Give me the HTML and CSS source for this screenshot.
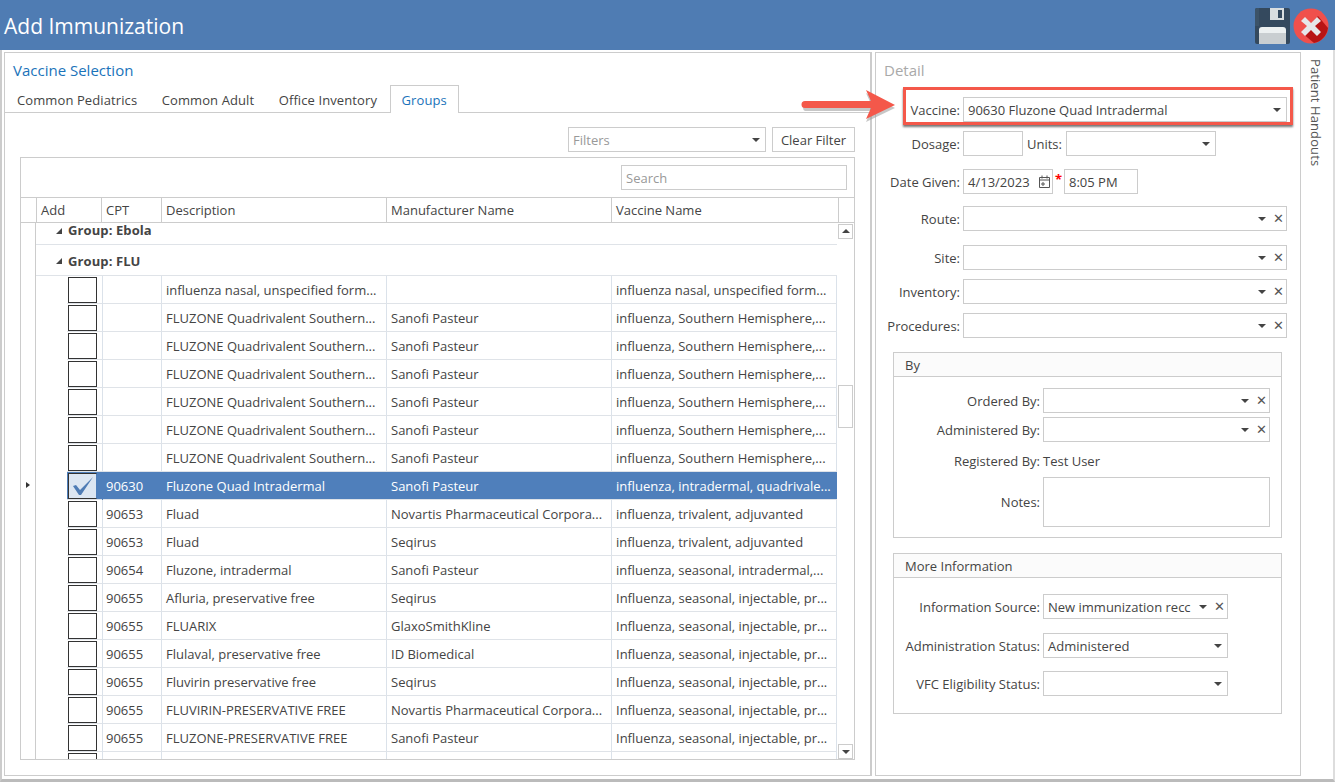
FILE: index.html
```html
<!DOCTYPE html>
<html lang="en">
<head>
<meta charset="utf-8">
<title>Add Immunization</title>
<link rel="stylesheet" href="styles.css">
</head>
<body>
<div class="window">
  <header class="titlebar">
    <h1 class="title">Add Immunization</h1>
    <div class="title-actions">
      <svg class="icon-save" width="35" height="36" viewBox="0 0 35 36" aria-label="Save"><rect width="35" height="36" rx="2" fill="#34495e"/><path d="M0 2a2 2 0 0 1 2-2h2v18H0z" fill="#3c5368"/><rect x="15" y="0" width="14" height="12" fill="#d9dee0"/><rect x="23" y="2" width="4" height="8" fill="#34495e"/><path d="M4 26v-4a3 3 0 0 1 3-3h21a3 3 0 0 1 3 3v4z" fill="#ecf0f1"/><rect x="4" y="25" width="27" height="11" fill="#c9ced1"/></svg>
      <svg class="icon-close" width="36" height="36" viewBox="0 0 36 36" aria-label="Close"><circle cx="18" cy="18" r="17.5" fill="#f0504c"/><path d="M25 8l10 12a17.5 17.5 0 0 1-14 15L9 25z" fill="#b81414"/><path d="M12 9l6 6 6-6 4 4-6 5 6 6-4 4-6-6-6 6-4-4 6-6-6-5z" fill="#e6e7e9"/></svg>
    </div>
  </header>
  <div class="body">
    <section class="selection">
      <h2 class="panel-title blue">Vaccine Selection</h2>
      <nav class="tabs">
        <span class="tab">Common Pediatrics</span>
        <span class="tab">Common Adult</span>
        <span class="tab">Office Inventory</span>
        <span class="tab active">Groups</span>
      </nav>
      <div class="tab-body">
        <div class="filters">
          <div class="box filter-select"><span class="muted">Filters</span><i class="caret"></i></div>
          <button class="btn" type="button">Clear Filter</button>
        </div>
        <div class="grid">
          <div class="grid-search"><div class="box search muted">Search</div></div>
          <div class="grid-head">
            <span></span><span>Add</span><span>CPT</span><span>Description</span><span>Manufacturer Name</span><span>Vaccine Name</span><span></span>
          </div>
          <div class="grid-body">
            <div class="indicator"><i class="row-mark"></i></div>
            <div class="rows">
              <div class="group clipped"><i class="tri"></i>Group: Ebola</div>
              <div class="group"><i class="tri"></i>Group: FLU</div>
              <div class="row"><span class="check"></span><span></span><span>influenza nasal, unspecified form...</span><span></span><span>influenza nasal, unspecified form...</span></div>
              <div class="row"><span class="check"></span><span></span><span>FLUZONE Quadrivalent Southern...</span><span>Sanofi Pasteur</span><span>influenza, Southern Hemisphere,...</span></div>
              <div class="row"><span class="check"></span><span></span><span>FLUZONE Quadrivalent Southern...</span><span>Sanofi Pasteur</span><span>influenza, Southern Hemisphere,...</span></div>
              <div class="row"><span class="check"></span><span></span><span>FLUZONE Quadrivalent Southern...</span><span>Sanofi Pasteur</span><span>influenza, Southern Hemisphere,...</span></div>
              <div class="row"><span class="check"></span><span></span><span>FLUZONE Quadrivalent Southern...</span><span>Sanofi Pasteur</span><span>influenza, Southern Hemisphere,...</span></div>
              <div class="row"><span class="check"></span><span></span><span>FLUZONE Quadrivalent Southern...</span><span>Sanofi Pasteur</span><span>influenza, Southern Hemisphere,...</span></div>
              <div class="row"><span class="check"></span><span></span><span>FLUZONE Quadrivalent Southern...</span><span>Sanofi Pasteur</span><span>influenza, Southern Hemisphere,...</span></div>
              <div class="row selected"><span class="check checked"><svg width="24" height="22" viewBox="0 0 24 22"><path d="M2 11l3-1 4 5L22 2 10 20H8z" fill="#4f7cb5"/></svg></span><span>90630</span><span>Fluzone Quad Intradermal</span><span>Sanofi Pasteur</span><span>influenza, intradermal, quadrivale...</span></div>
              <div class="row"><span class="check"></span><span>90653</span><span>Fluad</span><span>Novartis Pharmaceutical Corpora...</span><span>influenza, trivalent, adjuvanted</span></div>
              <div class="row"><span class="check"></span><span>90653</span><span>Fluad</span><span>Seqirus</span><span>influenza, trivalent, adjuvanted</span></div>
              <div class="row"><span class="check"></span><span>90654</span><span>Fluzone, intradermal</span><span>Sanofi Pasteur</span><span>influenza, seasonal, intradermal,...</span></div>
              <div class="row"><span class="check"></span><span>90655</span><span>Afluria, preservative free</span><span>Seqirus</span><span>Influenza, seasonal, injectable, pr...</span></div>
              <div class="row"><span class="check"></span><span>90655</span><span>FLUARIX</span><span>GlaxoSmithKline</span><span>Influenza, seasonal, injectable, pr...</span></div>
              <div class="row"><span class="check"></span><span>90655</span><span>Flulaval, preservative free</span><span>ID Biomedical</span><span>Influenza, seasonal, injectable, pr...</span></div>
              <div class="row"><span class="check"></span><span>90655</span><span>Fluvirin preservative free</span><span>Seqirus</span><span>Influenza, seasonal, injectable, pr...</span></div>
              <div class="row"><span class="check"></span><span>90655</span><span>FLUVIRIN-PRESERVATIVE FREE</span><span>Novartis Pharmaceutical Corpora...</span><span>Influenza, seasonal, injectable, pr...</span></div>
              <div class="row"><span class="check"></span><span>90655</span><span>FLUZONE-PRESERVATIVE FREE</span><span>Sanofi Pasteur</span><span>Influenza, seasonal, injectable, pr...</span></div>
              <div class="row partial"><span class="check"></span><span></span><span></span><span></span><span></span></div>
            </div>
            <div class="scrollbar">
              <span class="sb-btn"><i class="up"></i></span>
              <span class="sb-thumb"></span>
              <span class="sb-btn"><i class="caret"></i></span>
            </div>
          </div>
        </div>
      </div>
    </section>
    <section class="detail">
      <h2 class="panel-title grey">Detail</h2>
      <div class="field first">
        <label class="lbl">Vaccine:</label>
        <div class="box wide"><span>90630 Fluzone Quad Intradermal</span><i class="caret"></i></div>
        <div class="callout"></div>
        <svg class="arrow" width="100" height="34" viewBox="0 0 100 34"><path d="M5 12h66l-5-11 29 15-29 14 5-11H5a4 4 0 0 1 0-7z" fill="#999" opacity=".55" transform="translate(0 2)"/><path d="M5 11h66L66 0l29 15-29 14 5-11H5a3.500 3.500 0 0 1 0-7z" fill="#f4584a"/></svg>
      </div>
      <div class="field m9">
        <label class="lbl">Dosage:</label>
        <div class="box dose"></div>
        <label class="units">Units:</label>
        <div class="box unit-select"><i class="caret"></i></div>
      </div>
      <div class="field m13">
        <label class="lbl">Date Given:</label>
        <div class="box date"><span>4/13/2023</span><svg width="13" height="13" viewBox="0 0 13 13" fill="none" stroke="#555"><path d="M1.500 2.500h10v10h-10zM1.500 5h10M4 .5v3M9 .5v3M4 8h2v2H4z"/></svg></div>
        <span class="req">*</span>
        <div class="box time">8:05 PM</div>
      </div>
      <div class="field m12"><label class="lbl">Route:</label><div class="box wide"><i class="caret"></i><i class="clear">✕</i></div></div>
      <div class="field m14"><label class="lbl">Site:</label><div class="box wide"><i class="caret"></i><i class="clear">✕</i></div></div>
      <div class="field m9"><label class="lbl">Inventory:</label><div class="box wide"><i class="caret"></i><i class="clear">✕</i></div></div>
      <div class="field m9"><label class="lbl">Procedures:</label><div class="box wide"><i class="caret"></i><i class="clear">✕</i></div></div>

      <fieldset class="group-box by">
        <div class="group-head">By</div>
        <div class="sub first-sub"><label class="lbl2">Ordered By:</label><div class="box mid"><i class="caret"></i><i class="clear">✕</i></div></div>
        <div class="sub m4"><label class="lbl2">Administered By:</label><div class="box mid"><i class="caret"></i><i class="clear">✕</i></div></div>
        <div class="sub m6"><label class="lbl2">Registered By:</label><span>Test User</span></div>
        <div class="sub m4 tall"><label class="lbl2">Notes:</label><div class="box mid notes"></div></div>
      </fieldset>

      <fieldset class="group-box info">
        <div class="group-head">More Information</div>
        <div class="sub info-first"><label class="lbl2">Information Source:</label><div class="box short"><span class="clip">New immunization recc</span><i class="caret"></i><i class="clear">✕</i></div></div>
        <div class="sub m14"><label class="lbl2">Administration Status:</label><div class="box short"><span>Administered</span><i class="caret"></i></div></div>
        <div class="sub m13"><label class="lbl2">VFC Eligibility Status:</label><div class="box short"><i class="caret"></i></div></div>
      </fieldset>
    </section>
    <aside class="handouts">Patient Handouts</aside>
  </div>
</div>
</body>
</html>
```
FILE: styles.css
```css
* { box-sizing: border-box; }
html, body { margin: 0; padding: 0; }
body {
  width: 1335px;
  height: 782px;
  overflow: hidden;
  background: #fff;
  font-family: "Open Sans", "Noto Sans", "Liberation Sans", sans-serif;
  font-size: 13px;
  color: #444;
}
.window {
  width: 1335px;
  height: 782px;
  display: flex;
  flex-direction: column;
  border-left: 2px solid #ccc;
  border-right: 2px solid #ddd;
  border-bottom: 3px solid #bbb;
}
.titlebar {
  flex: 0 0 50px;
  margin: 0 -2px;
  background: #4f7cb3;
  display: flex;
  align-items: center;
  justify-content: space-between;
  padding: 2px 6px 0 4px;
}
.title {
  margin: 0;
  font-size: 21px;
  font-weight: 400;
  color: #fff;
}
.title-actions { display: flex; align-items: center; gap: 3px; }
.body { flex: 1; display: flex; min-height: 0; padding-top: 2px; }
.selection {
  width: 868px;
  margin: 0 0 3px 2px;
  border: 1px solid #ccc;
  border-right-width: 2px;
  border-left-width: 1px;
  display: flex;
  flex-direction: column;
}
.panel-title {
  margin: 0;
  font-size: 15px;
  font-weight: 400;
  line-height: 20px;
  padding: 7px 0 0 8px;
}
.blue { color: #1a73ba; }
.grey { color: #a9a9a9; }
.tabs {
  display: flex;
  gap: .5px;
  height: 33px;
  padding-top: 5px;
  letter-spacing: .1px;
}
.tab { padding: 0 12px; line-height: 31px; height: 28px; color: #444; }
.tab.active {
  color: #1a73ba;
  border: 1px solid #ccc;
  border-bottom: 0;
  background: #fff;
  padding: 0 11px;
  line-height: 29px;
  position: relative;
  z-index: 1;
}
.tab-body {
  flex: 1;
  margin-top: -1px;
  border-top: 1px solid #ccc;
  padding: 14px 15px 15px 15px;
  display: flex;
  flex-direction: column;
  min-height: 0;
}
.box {
  border: 1px solid #ccc;
  background: #fff;
  height: 25px;
  display: flex;
  align-items: center;
  padding-left: 4px;
  position: relative;
  color: #444;
  white-space: nowrap;
}
.muted { color: #999; }
.caret {
  display: inline-block;
  width: 0;
  height: 0;
  border-left: 4px solid transparent;
  border-right: 4px solid transparent;
  border-top: 4px solid #444;
}
.box > .caret { margin-left: auto; margin-right: 5px; }
.clear {
  font-style: normal;
  font-family: "DejaVu Sans", sans-serif;
  font-size: 13px;
  line-height: 16px;
  padding-top: 1px;
  color: #555;
  width: 13px;
  margin-right: 1px;
  text-align: center;
}
.box > .caret:has(+ .clear) { margin-right: 6px; }
.filters { display: flex; justify-content: flex-end; gap: 6px; margin-bottom: 5px; }
.filter-select { width: 198px; }
.btn {
  width: 83px;
  height: 25px;
  border: 1px solid #ccc;
  background: #fff;
  font: inherit;
  color: #444;
  padding: 0;
}
.grid {
  flex: 1;
  min-height: 0;
  border: 1px solid #ccc;
  display: flex;
  flex-direction: column;
}
.grid-search {
  flex: 0 0 39px;
  display: flex;
  justify-content: flex-end;
  align-items: flex-start;
  padding: 7px 7px 0 0;
}
.search { width: 226px; }
.grid-head {
  flex: 0 0 26px;
  display: grid;
  grid-template-columns: 15px 65px 60px 225px 225px 227px 17px;
  border-top: 1px solid #ccc;
  border-bottom: 1px solid #ccc;
  background: #fff;
  position: relative;
  z-index: 1;
}
.grid-head span {
  border-left: 1px solid #ccc;
  padding-left: 4px;
  line-height: 24px;
}
.grid-head span:first-child { border-left: 0; }
.grid-body { flex: 1; display: flex; min-height: 0; }
.indicator {
  width: 15px;
  flex: none;
  border-right: 1px solid #ccc;
  padding: 259px 0 0 5px;
}
.row-mark {
  display: block;
  width: 0;
  height: 0;
  border-top: 3.500px solid transparent;
  border-bottom: 3.500px solid transparent;
  border-left: 4px solid #333;
}
.rows { width: 801px; flex: none; }
.group {
  height: 31px;
  border-bottom: 1px solid #dfe3e8;
  padding: 2px 0 0 20px;
  font-weight: 700;
  font-size: 13px;
  line-height: 15px;
  letter-spacing: .1px;
  display: flex;
  align-items: center;
  gap: 3px;
  color: #444;
}
.group.clipped { height: 22px; padding: 0 0 6px 20px; }
.tri {
  width: 0;
  height: 0;
  border-left: 6px solid transparent;
  border-bottom: 6px solid #444;
  margin-right: 3px;
}
.row {
  height: 28px;
  margin-left: 31px;
  display: grid;
  grid-template-columns: 35px 60px 225px 225px 225px;
  border-bottom: 1px solid #dfe3e8;
  align-items: stretch;
}
.row.partial { height: 7px; border-bottom: 0; overflow: hidden; }
.row > span {
  border-right: 1px solid #dbe2ea;
  padding-left: 4px;
  line-height: 28px;
  white-space: nowrap;
  overflow: hidden;
}
.row > .check {
  width: 29px;
  height: 26px;
  margin: 1px 5px 0 1px;
  padding: 0;
  border: 1px solid #333;
  background: #fff;
  overflow: visible;
  position: relative;
}
.row .check::after {
  content: "";
  position: absolute;
  top: -2px;
  bottom: -2px;
  right: -7px;
  width: 1px;
  background: #dbe2ea;
}
.row.selected { background: #4f7fbb; }
.row.selected > span { color: #fff; border-right-color: #4f7fbb; }
.row.selected .check::after { background: #4f7fbb; }
.checked {
  background: #dce6f2 !important;
  display: flex;
  align-items: center;
  justify-content: center;
}
.scrollbar {
  flex: 1;
  position: relative;
  display: flex;
  flex-direction: column;
  padding: 1px 1px 0 0;
  align-items: flex-end;
}
.sb-btn {
  width: 15px;
  height: 15px;
  border: 1px solid #ccc;
  display: flex;
  align-items: center;
  justify-content: center;
  background: #fff;
}
.sb-thumb {
  width: 15px;
  height: 44px;
  border: 1px solid #ccc;
  margin: 146px 0 316px;
}
.up {
  display: block;
  width: 0;
  height: 0;
  border-left: 4px solid transparent;
  border-right: 4px solid transparent;
  border-bottom: 4px solid #444;
}
.detail {
  width: 426px;
  margin: 0 0 3px 3px;
  border: 1px solid #ccc;
  padding: 0;
}
.field {
  display: flex;
  align-items: center;
  height: 25px;
  position: relative;
  width: 411px;
}
.first { margin-top: 17px; }
.m4 { margin-top: 4px; }
.m6 { margin-top: 6px; }
.m9 { margin-top: 9px; }
.m12 { margin-top: 12px; }
.m13 { margin-top: 13px; }
.m14 { margin-top: 14px; }
.lbl { width: 84px; text-align: right; margin-right: 3px; flex: none; }
.wide { width: 324px; }
.dose { width: 60px; }
.units { margin: 0 3px 0 4px; width: 36px; }
.unit-select { width: 150px; }
.date { width: 90px; justify-content: space-between; padding-right: 1px; }
.req { color: #f00; width: 11px; font-weight: 700; align-self: flex-start; padding: 1px 0 0 2px; }
.time { width: 74px; }
.callout {
  position: absolute;
  left: 27px;
  right: -6px;
  top: -10px;
  bottom: -3px;
  border: 3px solid #f4584a;
  box-shadow: 0 2px 2px #777;
}
.arrow { position: absolute; left: -76px; top: -7px; }
.group-box {
  margin: 14px 0 0 17px;
  padding: 0;
  width: 389px;
  border: 1px solid #ccc;
  min-width: 0;
  display: block;
}
.by { height: 186px; }
.info { height: 161px; margin-top: 15px; }
.group-head {
  height: 24px;
  border-bottom: 1px solid #ccc;
  background: #fbfbfb;
  padding-left: 11px;
  line-height: 24px;
}
.sub { display: flex; align-items: center; height: 25px; }
.first-sub { margin-top: 11px; }
.info-first { margin-top: 16px; }
.lbl2 { width: 146px; text-align: right; margin-right: 3px; flex: none; }
.mid { width: 227px; }
.short { width: 185px; }
.clip { width: 146px; overflow: hidden; flex: none; }
.tall { height: 50px; align-items: center; }
.notes { height: 50px; }
.handouts {
  writing-mode: vertical-rl;
  flex: 1;
  padding: 7px 8px 0 0;
  letter-spacing: .1px;
  color: #555;
}
```
